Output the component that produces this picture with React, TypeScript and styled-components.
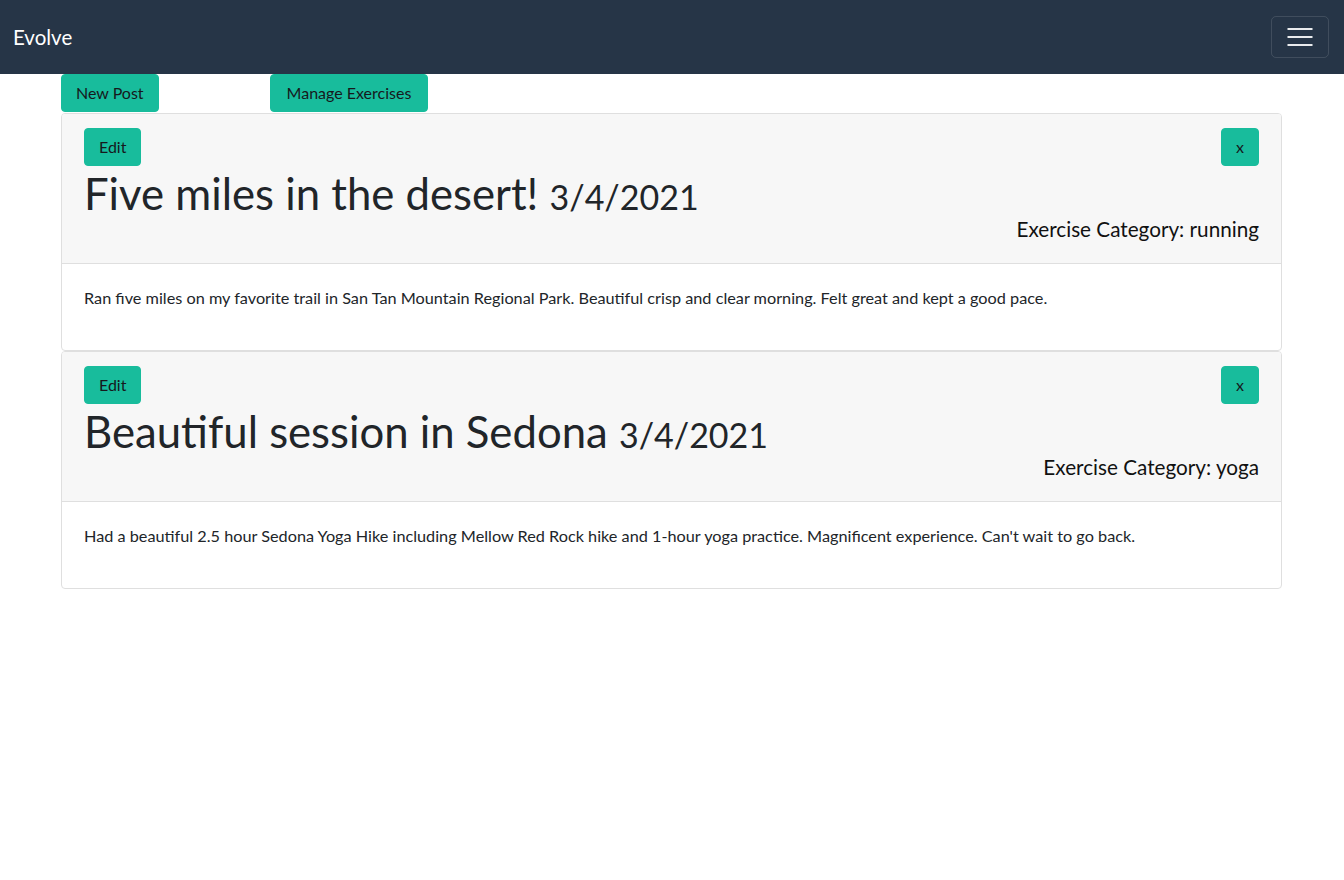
import React from "react";
import styled, { createGlobalStyle } from "styled-components";

const Global = createGlobalStyle`
  html, body { margin: 0; padding: 0; background: #fff; }
  body { font-family: Lato, "Open Sans", sans-serif; font-size: 16px; line-height: 1.5; color: #212529; }
  * { box-sizing: border-box; }
`;

const Navbar = styled.nav`
  height: 74px;
  background: #263547;
  display: flex;
  align-items: center;
  justify-content: space-between;
  padding: 0 15px 0 13px;
`;

const Brand = styled.a`
  color: #fff;
  font-size: 20.5px;
  line-height: 30px;
  text-decoration: none;
`;

const Toggler = styled.button`
  width: 58px;
  height: 42px;
  margin-top: -1px;
  border: 1px solid rgba(255, 255, 255, 0.12);
  border-radius: 5px;
  background: transparent;
  display: flex;
  align-items: center;
  justify-content: center;
  padding: 0;
`;

const Main = styled.main`
  padding: 0 62px 0 61px;
`;

const Actions = styled.div`
  display: flex;
  gap: 111px;
  padding-bottom: 1px;
`;

const Button = styled.button<{ $wide?: boolean }>`
  font-family: Lato, sans-serif;
  font-size: 16px;
  line-height: 24px;
  padding: 6px ${(p) => (p.$wide ? "16px" : "14px")};
  border: 1px solid #18bc9c;
  background: #18bc9c;
  color: #16191c;
  border-radius: 4px;
  cursor: pointer;
`;

const Card = styled.article`
  border: 1px solid #dfdfdf;
  border-radius: 4px;
  background: #fff;
  overflow: hidden;
`;

const Header = styled.header`
  background: #f7f7f7;
  border-bottom: 1px solid #dfdfdf;
  padding: 14px 22px 22px;
`;

const TopRow = styled.div`
  display: flex;
  justify-content: space-between;
`;

const Title = styled.h1`
  margin: 3px 0 0;
  font-size: 43.7px;
  font-weight: 400;
  line-height: 48px;
  color: #212529;
`;

const DateText = styled.span`
  font-size: 34px;
  line-height: 1;
`;

const Category = styled.div`
  text-align: right;
  font-size: 20.7px;
  line-height: 24px;
  color: #111;
`;

const Body = styled.div`
  padding: 22px 22px 24px;
`;

const Text = styled.p`
  margin: 0 0 16px;
  font-size: 16.25px;
  line-height: 24px;
  color: #212529;
`;

const posts = [
  {
    title: "Five miles in the desert!",
    date: "3/4/2021",
    category: "running",
    text: "Ran five miles on my favorite trail in San Tan Mountain Regional Park. Beautiful crisp and clear morning. Felt great and kept a good pace.",
  },
  {
    title: "Beautiful session in Sedona",
    date: "3/4/2021",
    category: "yoga",
    text: "Had a beautiful 2.5 hour Sedona Yoga Hike including Mellow Red Rock hike and 1-hour yoga practice. Magnificent experience. Can't wait to go back.",
  },
];

export default function App() {
  return (
    <>
      <Global />
      <Navbar>
        <Brand href="#">Evolve</Brand>
        <Toggler aria-label="menu">
          <svg width="30" height="30" viewBox="0 0 30 30">
            <path d="M2.5 7h25M2.5 15h25M2.5 23h25" stroke="rgba(255,255,255,0.9)" strokeWidth="2" />
          </svg>
        </Toggler>
      </Navbar>
      <Main>
        <Actions>
          <Button>New Post</Button>
          <Button $wide>Manage Exercises</Button>
        </Actions>
        {posts.map((p) => (
          <Card key={p.title}>
            <Header>
              <TopRow>
                <Button>Edit</Button>
                <Button>x</Button>
              </TopRow>
              <Title>
                {p.title} <DateText>{p.date}</DateText>
              </Title>
              <Category>Exercise Category: {p.category}</Category>
            </Header>
            <Body>
              <Text>{p.text}</Text>
            </Body>
          </Card>
        ))}
      </Main>
    </>
  );
}
